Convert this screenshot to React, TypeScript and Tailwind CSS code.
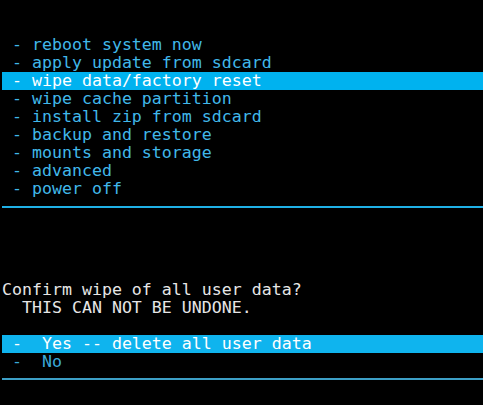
const menu = [
  "reboot system now",
  "apply update from sdcard",
  "wipe data/factory reset",
  "wipe cache partition",
  "install zip from sdcard",
  "backup and restore",
  "mounts and storage",
  "advanced",
  "power off",
];

const App = () => {
  const selected = 2;

  return (
    <div className="w-[483px] h-[405px] bg-black overflow-hidden font-['DejaVu_Sans_Mono',monospace] text-[16.6px] leading-[18px] whitespace-pre">
      <div className="pt-[36px] pl-[2px]">
        {menu.map((item, i) => (
          <div
            key={item}
            className={
              i === selected
                ? "h-[18px] bg-[#00b2ef] text-white"
                : "h-[18px] text-[#40b8ea]"
            }
          >
            {" - " + item}
          </div>
        ))}
        <div className="mt-[8px] h-[2px] bg-[#1fb0e6]" />
      </div>

      <div className="mt-[73px] pl-[2px]">
        <div className="h-[18px] text-[#e6e6e6]">Confirm wipe of all user data?</div>
        <div className="h-[18px] text-[#e6e6e6]">  THIS CAN NOT BE UNDONE.</div>
        <div className="mt-[18px] h-[18px] bg-[#0fb4ee] text-white">{" -  Yes -- delete all user data"}</div>
        <div className="h-[18px] text-[#3aa8d8]">{" -  No"}</div>
        <div className="mt-[7px] h-[2px] bg-[#3c9fc6]" />
      </div>
    </div>
  );
};

export default App;
